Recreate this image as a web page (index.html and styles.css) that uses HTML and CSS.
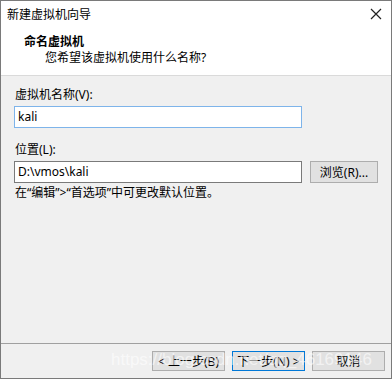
FILE: index.html
```html
<!DOCTYPE html>
<html lang="zh-CN">

<head>
  <meta charset="UTF-8" />
  <title>新建虚拟机向导</title>
  <link rel="stylesheet" href="styles.css">
</head>

<body>
  <div class="window">
    <div class="titlebar">
      <span class="title">新建虚拟机向导</span>
      <span class="close">
        <svg width="12" height="12" viewBox="0 0 12 12">
          <path d="M1 1 L11 11 M11 1 L1 11" stroke="#222" stroke-width="1.2" fill="none" />
        </svg>
      </span>
    </div>

    <div class="header">
      <div class="header-title">命名虚拟机</div>
      <div class="header-sub">您希望该虚拟机使用什么名称?</div>
    </div>

    <div class="content">
      <label class="field-label">虚拟机名称(V):</label>
      <div class="textbox focused">kali</div>

      <label class="field-label location">位置(L):</label>
      <div class="location-row">
        <div class="textbox">D:\vmos\kali</div>
        <button class="btn browse">浏览(R)...</button>
      </div>
      <p class="hint">在“编辑”&gt;“首选项”中可更改默认位置。</p>
    </div>

    <div class="footer">
      <button class="btn">&lt; 上一步(B)</button>
      <button class="btn primary">下一步(N) &gt;</button>
      <button class="btn">取消</button>
    </div>

    <div class="watermark">https://blog.csdn.net/qq_46169146</div>
  </div>
</body>

</html>
```

FILE: styles.css
```css
:root {
  --border: #7a7a7a;
  --panel: #f0f0f0;
  --btn-bg: #e1e1e1;
  --btn-border: #adadad;
  --focus: #0078d7;
  --text: #000;
}

* {
  box-sizing: border-box;
}

body {
  margin: 0;
  font-family: 'Noto Sans', 'Noto Sans CJK SC', sans-serif;
  font-size: 12px;
  color: var(--text);
}

.window {
  width: 392px;
  height: 379px;
  border: 1px solid var(--border);
  background: var(--panel);
  display: flex;
  flex-direction: column;
  position: relative;
  overflow: hidden;
}

.titlebar {
  height: 25px;
  background: #fff;
  display: flex;
  justify-content: space-between;
  align-items: center;
  padding: 0 9px 0 6px;
}

.title {
  font-size: 12px;
  color: #000;
}

.close {
  display: flex;
  width: 12px;
  height: 12px;
}

.header {
  background: #fff;
  height: 50px;
  padding: 8px 0 0 23px;
  border-bottom: 1px solid #dadada;
}

.header-title {
  font-weight: bold;
  line-height: 16px;
}

.header-sub {
  padding-left: 21px;
  line-height: 16px;
}

.content {
  flex: 1;
  padding: 11px 13px 0 13px;
  display: flex;
  flex-direction: column;
}

.field-label {
  display: block;
  line-height: 16px;
  padding-left: 1px;
}

.field-label.location {
  margin-top: 14px;
}

.textbox {
  width: 288px;
  height: 22px;
  margin-top: 3px;
  background: #fff;
  border: 1px solid #7a7a7a;
  padding: 0 3px;
  line-height: 20px;
}

.textbox.focused {
  border-color: #7eb4ea;
}

.location-row {
  display: flex;
  align-items: flex-end;
  gap: 8px;
}

.btn {
  font-family: inherit;
  font-size: 12px;
  width: 73px;
  height: 20px;
  padding: 0;
  background: var(--btn-bg);
  border: 1px solid var(--btn-border);
  color: var(--text);
}

.browse {
  width: 68px;
  height: 22px;
}

.hint {
  margin: 2px 0 0 1px;
  line-height: 16px;
}

.footer {
  height: 35px;
  border-top: 1px solid #a0a0a0;
  display: flex;
  justify-content: flex-end;
  align-items: flex-start;
  gap: 7px;
  padding: 7px 6px 0 0;
}

.btn.primary {
  border: 1px solid var(--focus);
}

.watermark {
  position: absolute;
  left: 110px;
  bottom: 8px;
  font-family: 'Liberation Sans', sans-serif;
  font-size: 17px;
  color: rgba(255, 255, 255, 0.6);
  pointer-events: none;
}
```
